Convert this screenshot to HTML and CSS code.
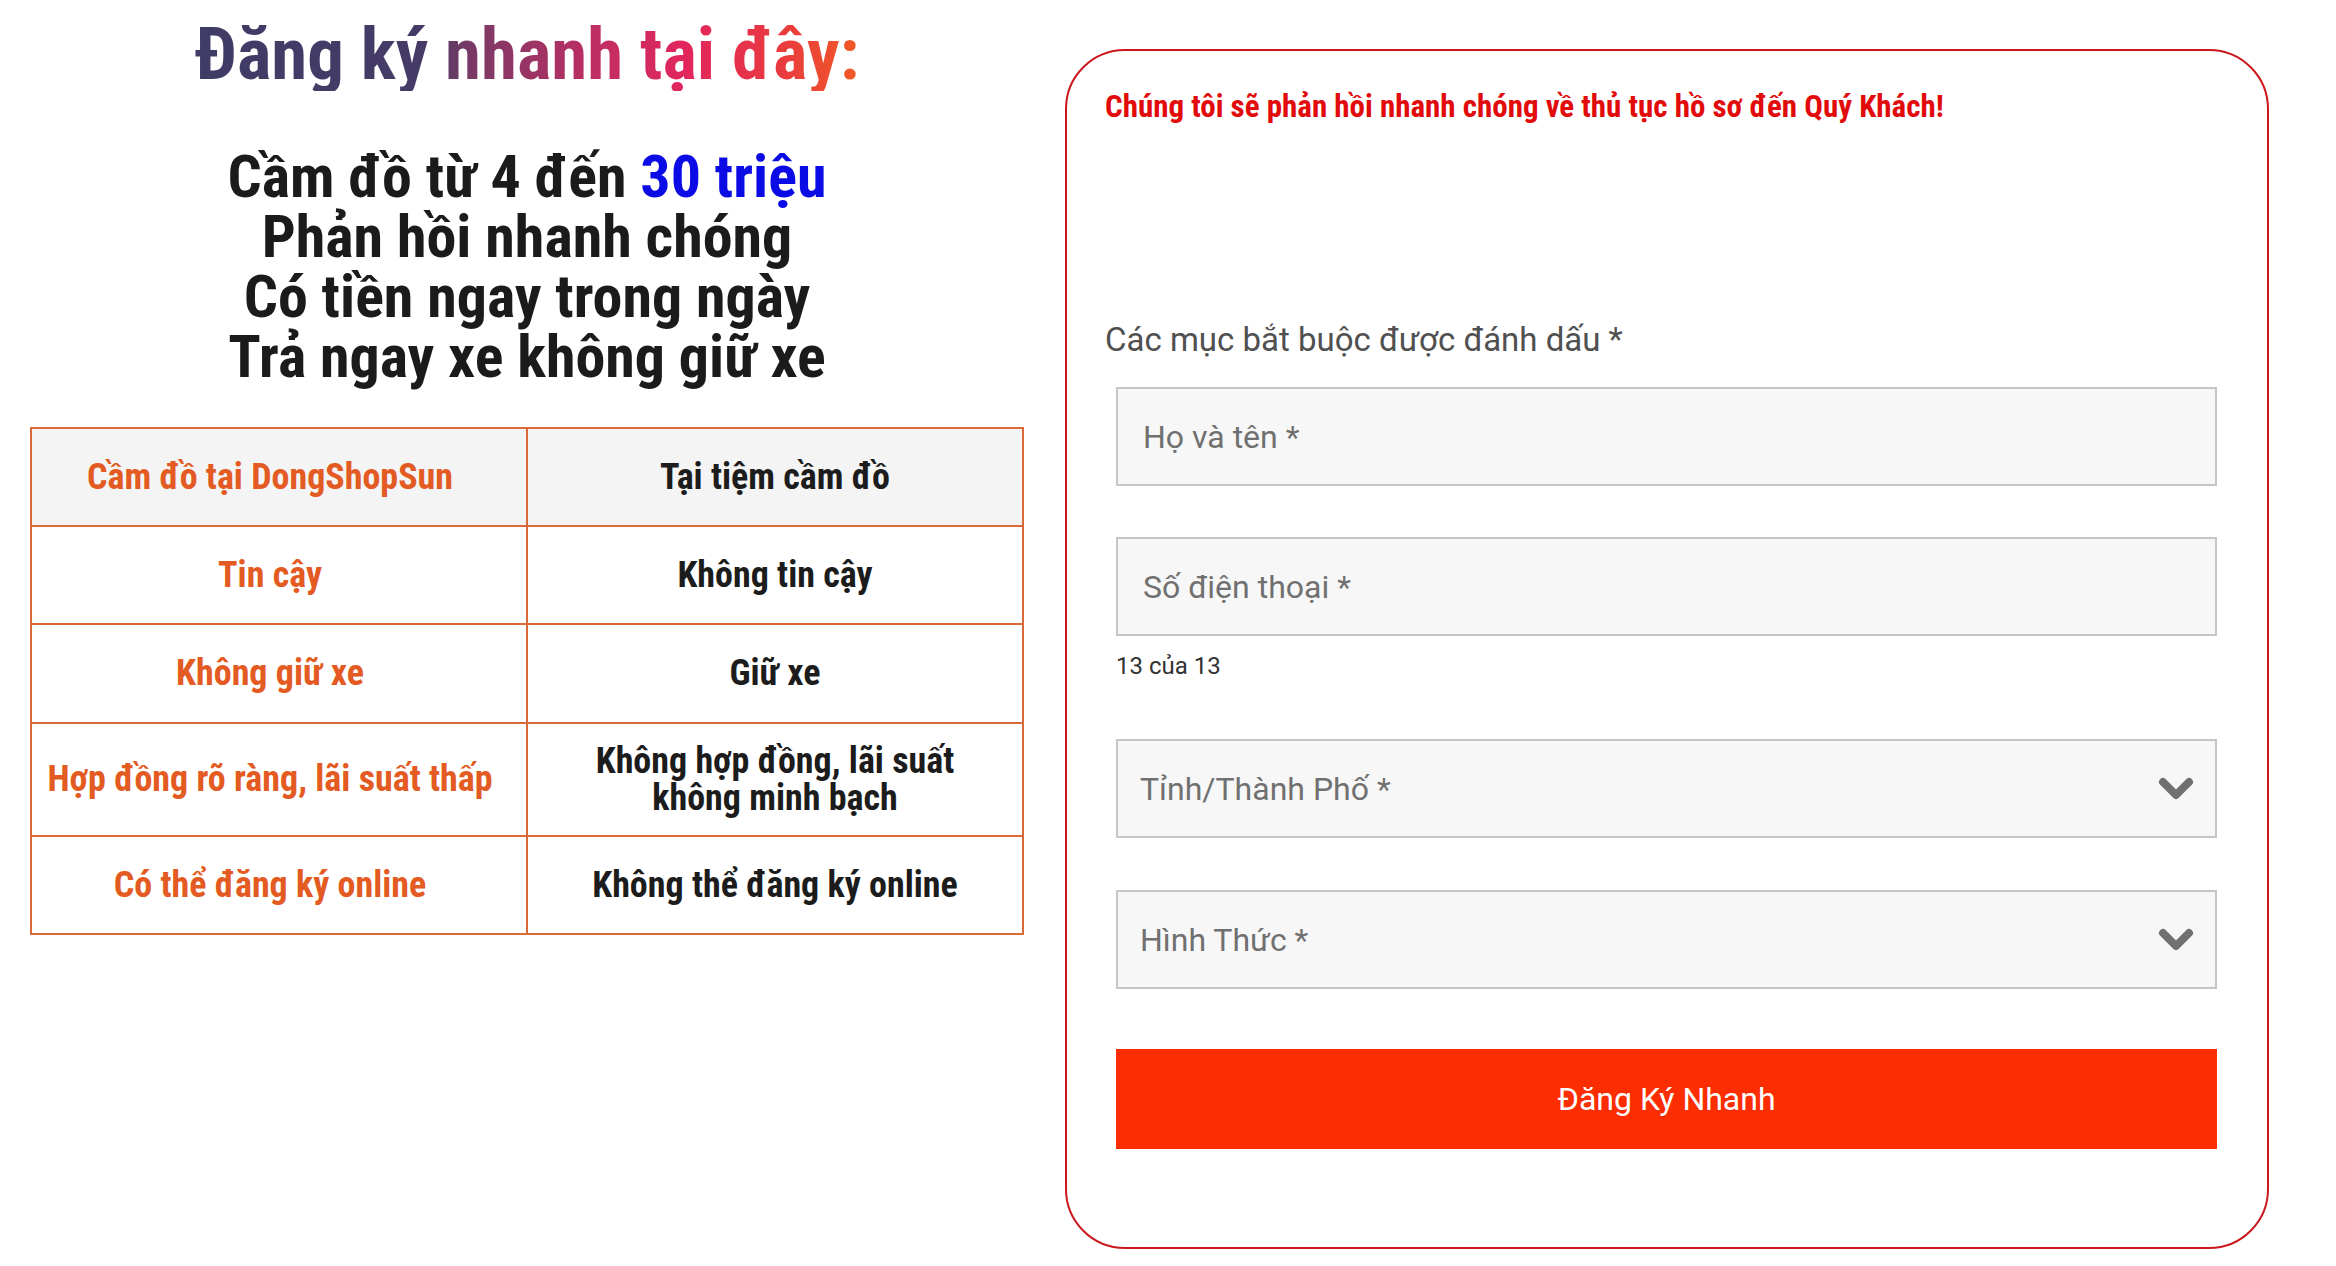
FILE: index.html
```html
<!DOCTYPE html>
<html lang="vi">
<head>
<meta charset="utf-8">
<title>Đăng ký nhanh</title>
<link rel="stylesheet" href="styles.css">
</head>
<body>
<div class="page">
  <section class="left">
    <h1 class="title"><span class="grad">Đăng ký nhanh tại đây:</span></h1>
    <div class="promo">
      <p>Cầm đồ từ 4 đến <span class="blue">30 triệu</span></p>
      <p>Phản hồi nhanh chóng</p>
      <p>Có tiền ngay trong ngày</p>
      <p>Trả ngay xe không giữ xe</p>
    </div>
    <div class="compare">
      <div class="cell c1 head">Cầm đồ tại DongShopSun</div>
      <div class="cell c2 head">Tại tiệm cầm đồ</div>
      <div class="cell c1">Tin cậy</div>
      <div class="cell c2">Không tin cậy</div>
      <div class="cell c1">Không giữ xe</div>
      <div class="cell c2">Giữ xe</div>
      <div class="cell c1">Hợp đồng rõ ràng, lãi suất thấp</div>
      <div class="cell c2">Không hợp đồng, lãi suất<br>không minh bạch</div>
      <div class="cell c1">Có thể đăng ký online</div>
      <div class="cell c2">Không thể đăng ký online</div>
    </div>
  </section>

  <section class="card">
    <p class="notice">Chúng tôi sẽ phản hồi nhanh chóng về thủ tục hồ sơ đến Quý Khách!</p>
    <p class="required">Các mục bắt buộc được đánh dấu *</p>
    <div class="fields">
      <div class="field f-name"><span class="ph">Họ và tên *</span></div>
      <div class="field f-phone"><span class="ph">Số điện thoại *</span></div>
      <div class="counter">13 của 13</div>
      <div class="field select f-city">
        <span class="ph">Tỉnh/Thành Phố *</span>
        <svg class="chev" width="36" height="24" viewBox="0 0 36 24"><polyline points="5,5 18,18 31,5" fill="none" stroke="#707070" stroke-width="8" stroke-linecap="round" stroke-linejoin="round"/></svg>
      </div>
      <div class="field select f-type">
        <span class="ph">Hình Thức *</span>
        <svg class="chev" width="36" height="24" viewBox="0 0 36 24"><polyline points="5,5 18,18 31,5" fill="none" stroke="#707070" stroke-width="8" stroke-linecap="round" stroke-linejoin="round"/></svg>
      </div>
      <div class="submit">Đăng Ký Nhanh</div>
    </div>
  </section>
</div>
</body>
</html>
```
FILE: styles.css
```css
* { box-sizing: border-box; }
html, body { margin: 0; padding: 0; background: #ffffff; }
body { font-family: Roboto, "Noto Sans", sans-serif; }

.page {
  display: flex;
  align-items: flex-start;
  padding-left: 30px;
  gap: 41px;
}

/* ---------- left column ---------- */
.left {
  width: 994px;
  display: flex;
  flex-direction: column;
  align-items: center;
  font-family: "Roboto Condensed", Roboto, sans-serif;
  font-weight: 700;
}
.title {
  margin: 18px 0 0;
  font-size: 73px;
  line-height: 73px;
  font-weight: 700;
}
.grad {
  display: inline-block;
  background: linear-gradient(90deg, #3f3c66 0%, #453b66 34%, #7c3966 42%, #c52d63 62%, #e2265d 74%, #e9393f 88%, #f15a26 100%);
  -webkit-background-clip: text;
  background-clip: text;
  color: transparent;
}
.promo {
  margin-top: 56px;
  text-align: center;
  color: #1b1b1b;
  font-size: 60px;
  line-height: 60px;
}
.promo p { margin: 0; }
.blue { color: #0b0be6; }

.compare {
  margin-top: 40px;
  width: 994px;
  display: grid;
  grid-template-columns: 1fr 1fr;
  grid-template-rows: 96px 96px 97px 111px 96px;
  gap: 2px;
  padding: 2px;
  background: #db6a38;
}
.cell {
  background: #ffffff;
  display: flex;
  align-items: center;
  justify-content: center;
  text-align: center;
  font-size: 36px;
  line-height: 37px;
}
.cell.head { background: #f4f4f4; }
.c1 { color: #e35b22; padding-right: 18px; }
.c2 { color: #1c1c1c; }

/* ---------- form card ---------- */
.card {
  margin-top: 49px;
  width: 1204px;
  height: 1200px;
  border: 2px solid #c9181e;
  border-radius: 60px;
  padding: 38px 50px 0 38px;
}
.notice {
  margin: 0;
  font-family: "Roboto Condensed", Roboto, sans-serif;
  font-weight: 700;
  font-size: 31px;
  line-height: 36px;
  color: #e20b0b;
}
.required {
  margin: 196px 0 0;
  font-size: 33px;
  line-height: 38px;
  color: #505050;
}
.fields {
  margin-top: 28px;
  padding-left: 11px;
  display: flex;
  flex-direction: column;
}
.field {
  height: 99px;
  background: #f7f7f7;
  border: 2px solid #c6c6c6;
  display: flex;
  align-items: center;
  justify-content: space-between;
  padding: 0 21px 0 25px;
}
.ph {
  font-size: 32px;
  color: #707070;
}
.f-phone { margin-top: 51px; }
.counter {
  margin-top: 16px;
  font-size: 24px;
  line-height: 29px;
  color: #333333;
}
.f-city { margin-top: 58px; }
.f-type { margin-top: 52px; }
.select .ph { margin-left: -3px; }
.chev { display: block; }
.submit {
  margin-top: 60px;
  height: 100px;
  background: #fb2d01;
  color: #ffffff;
  font-size: 32px;
  display: flex;
  align-items: center;
  justify-content: center;
}
```
